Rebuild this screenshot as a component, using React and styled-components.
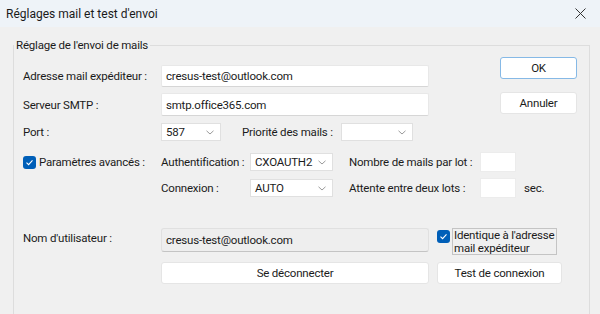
import React from "react";
import styled, { createGlobalStyle } from "styled-components";

const GlobalStyle = createGlobalStyle`
  html, body {
    margin: 0;
    padding: 0;
    background: #f0f0f0;
  }
  body {
    font-family: Roboto, "Liberation Sans", sans-serif;
    font-size: 11.5px;
    letter-spacing: -0.2px;
    color: #1b1b1b;
  }
`;

const Check = ({ top }) => (
  <CheckBox $top={top}>
    <svg width="9" height="7" viewBox="0 0 9 7">
      <polyline points="1.5,3.6 3.6,5.6 7.5,1.4" fill="none" stroke="#fff" strokeWidth="1.1" />
    </svg>
  </CheckBox>
);

const Combo = ({ width, value }) => (
  <ComboBox $w={width}>
    <span>{value}</span>
    <svg width="8" height="5" viewBox="0 0 8 5">
      <polyline points="0.5,0.8 4,4 7.5,0.8" fill="none" stroke="#9a9a9a" strokeWidth="1" />
    </svg>
  </ComboBox>
);

function App() {
  return (
    <Window>
      <GlobalStyle />
      <TitleBar>
        <Title>Réglages mail et test d'envoi</Title>
        <CloseButton>
          <svg width="11" height="11" viewBox="0 0 11 11">
            <path d="M0.5 0.5 L10.5 10.5 M10.5 0.5 L0.5 10.5" stroke="#333" strokeWidth="1" />
          </svg>
        </CloseButton>
      </TitleBar>
      <Body>
        <Group>
          <Legend>Réglage de l'envoi de mails</Legend>
          <Content>
            <TopFields>
              <Row $mt={8} $h={22}>
                <Label $w={138}>Adresse mail expéditeur :</Label>
                <TextField $w={268}>cresus-test@outlook.com</TextField>
              </Row>
              <Row $mt={6} $h={23}>
                <Label $w={138}>Serveur SMTP :</Label>
                <TextField $w={268}>smtp.office365.com</TextField>
              </Row>
            </TopFields>

            <ButtonStack>
              <Button $w={77} $default>OK</Button>
              <Button $w={77}>Annuler</Button>
            </ButtonStack>

            <Row $mt={7} $h={18} $full>
              <Label $w={138}>Port :</Label>
              <Combo width={60} value="587" />
              <Label $w={99} $ml={21}>Priorité des mails :</Label>
              <Combo width={72} value="" />
            </Row>

            <Row $mt={11} $h={20} $full>
              <CheckLabel $w={138}>
                <Check />
                <span>Paramètres avancés :</span>
              </CheckLabel>
              <Label $w={89}>Authentification :</Label>
              <Combo width={83} value="CXOAUTH2" />
              <Label $w={131} $ml={16}>Nombre de mails par lot :</Label>
              <SmallField />
            </Row>

            <Row $mt={6} $h={20} $full>
              <Label $w={138} />
              <Label $w={89}>Connexion :</Label>
              <Combo width={83} value="AUTO" />
              <Label $w={131} $ml={16}>Attente entre deux lots :</Label>
              <SmallField />
              <Label $ml={8}>sec.</Label>
            </Row>

            <Row $mt={30} $h={28} $full $top>
              <Label $w={138} $lh={21}>Nom d'utilisateur :</Label>
              <ReadOnlyField $w={268}>cresus-test@outlook.com</ReadOnlyField>
              <CheckLabel $ml={8} $top>
                <Check top={2} />
                <FocusBox>
                  Identique à l'adresse
                  <br />
                  mail expéditeur
                </FocusBox>
              </CheckLabel>
            </Row>

            <Row $mt={6} $h={22} $full>
              <Label $w={138} />
              <Button $w={268}>Se déconnecter</Button>
              <Button $w={125} $ml={8}>Test de connexion</Button>
            </Row>
          </Content>
        </Group>
      </Body>
    </Window>
  );
}

const Window = styled.div`
  width: 600px;
  height: 314px;
  overflow: hidden;
  display: flex;
  flex-direction: column;
  background: #f0f0f0;
`;

const TitleBar = styled.div`
  height: 27px;
  flex-shrink: 0;
  display: flex;
  align-items: center;
  justify-content: space-between;
  padding-left: 6px;
  background: #eef3f8;
`;

const Title = styled.div`
  font-size: 12px;
  letter-spacing: 0;
  color: #1a1a1a;
`;

const CloseButton = styled.div`
  width: 40px;
  height: 27px;
  display: flex;
  align-items: center;
  justify-content: center;
`;

const Body = styled.div`
  flex: 1;
  padding: 10px 10px 0 13px;
`;

const Group = styled.fieldset`
  margin: 0;
  padding: 0;
  min-height: 300px;
  border: 1px solid #dddddd;
  min-inline-size: auto;
`;

const Legend = styled.legend`
  margin-left: 0;
  padding: 0 2px;
  line-height: 16px;
`;

const Content = styled.div`
  display: grid;
  grid-template-columns: 477px 77px;
  align-items: start;
  padding: 4px 0 0 9px;
`;

const TopFields = styled.div`
  grid-column: 1;
  display: flex;
  flex-direction: column;
`;

const ButtonStack = styled.div`
  grid-column: 2;
  display: flex;
  flex-direction: column;
  gap: 13px;
`;

const Row = styled.div`
  display: flex;
  align-items: ${(p) => (p.$top ? "flex-start" : "center")};
  height: ${(p) => p.$h}px;
  margin-top: ${(p) => p.$mt || 0}px;
  grid-column: ${(p) => (p.$full ? "1 / -1" : "auto")};
`;

const Label = styled.div`
  flex-shrink: 0;
  width: ${(p) => (p.$w ? `${p.$w}px` : "auto")};
  margin-left: ${(p) => p.$ml || 0}px;
  line-height: ${(p) => (p.$lh ? `${p.$lh}px` : "normal")};
  white-space: nowrap;
`;

const CheckLabel = styled.div`
  flex-shrink: 0;
  display: flex;
  align-items: ${(p) => (p.$top ? "flex-start" : "center")};
  gap: ${(p) => (p.$top ? 2 : 3)}px;
  width: ${(p) => (p.$w ? `${p.$w}px` : "auto")};
  margin-left: ${(p) => p.$ml || 0}px;
  white-space: nowrap;
`;

const CheckBox = styled.div`
  width: 13px;
  height: 13px;
  flex-shrink: 0;
  margin-top: ${(p) => p.$top || 0}px;
  border-radius: 3px;
  background: #005fb8;
  display: flex;
  align-items: center;
  justify-content: center;
`;

const TextField = styled.div`
  box-sizing: border-box;
  width: ${(p) => p.$w}px;
  height: 100%;
  padding: 0 4px;
  display: flex;
  align-items: center;
  background: #ffffff;
  border: 1px solid #e8e8e8;
  border-bottom-color: #d6d6d6;
  border-radius: 2px;
`;

const ReadOnlyField = styled(TextField)`
  height: 24px;
  background: #eeeeee;
  border-color: #e0e0e0;
  border-bottom-color: #c4c4c4;
  border-radius: 3px;
`;

const SmallField = styled.div`
  box-sizing: border-box;
  width: 36px;
  height: 20px;
  flex-shrink: 0;
  background: #ffffff;
  border: 1px solid #ececec;
`;

const ComboBox = styled.div`
  box-sizing: border-box;
  width: ${(p) => p.$w}px;
  height: 18px;
  flex-shrink: 0;
  padding: 0 6px 0 4px;
  display: flex;
  align-items: center;
  justify-content: space-between;
  background: #ffffff;
  border: 1px solid #e0e0e0;
`;

const FocusBox = styled.div`
  box-sizing: border-box;
  width: 105px;
  height: 27px;
  padding: 0 1px;
  line-height: 13px;
  border: 1px solid #c4c4c4;
`;

const Button = styled.div`
  box-sizing: border-box;
  width: ${(p) => p.$w}px;
  height: 22px;
  flex-shrink: 0;
  margin-left: ${(p) => p.$ml || 0}px;
  display: flex;
  align-items: center;
  justify-content: center;
  background: #ffffff;
  border: 1px solid ${(p) => (p.$default ? "#86b9e6" : "#e5e5e5")};
  border-radius: 3px;
`;

export default App;
